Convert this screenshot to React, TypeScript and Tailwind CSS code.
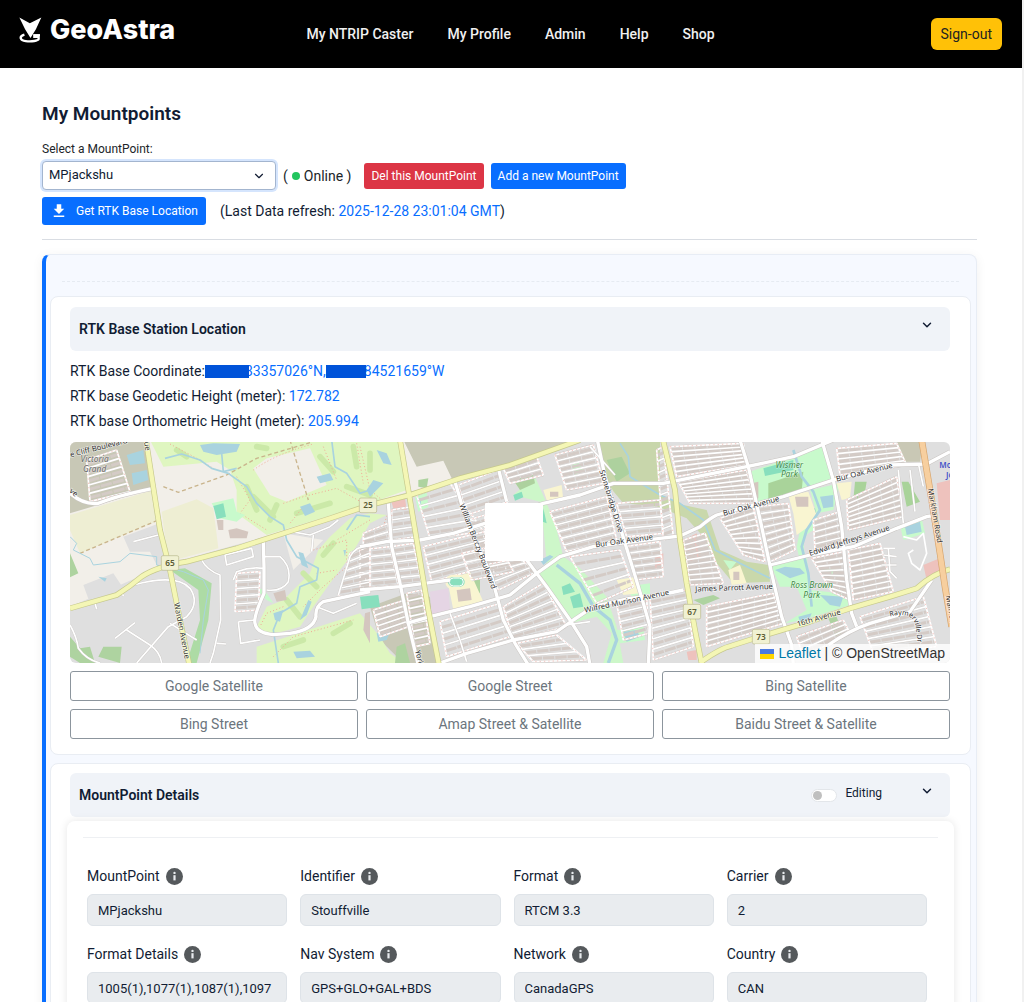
import { useState } from "react";
import { ChevronDown } from "lucide-react";
import { MdDownload } from "react-icons/md";

type Point = [number, number];

interface Block {
  corners: [Point, Point, Point, Point];
  rows: number;
}

interface Field {
  id: string;
  label: string;
  value: string;
}

const navLinks = ["My NTRIP Caster", "My Profile", "Admin", "Help", "Shop"];

const mapLinks = [
  "Google Satellite",
  "Google Street",
  "Bing Satellite",
  "Bing Street",
  "Amap Street & Satellite",
  "Baidu Street & Satellite",
];

const fields: Field[] = [
  { id: "mountpoint", label: "MountPoint", value: "MPjackshu" },
  { id: "identifier", label: "Identifier", value: "Stouffville" },
  { id: "format", label: "Format", value: "RTCM 3.3" },
  { id: "carrier", label: "Carrier", value: "2" },
  { id: "format-details", label: "Format Details", value: "1005(1),1077(1),1087(1),1097" },
  { id: "nav-system", label: "Nav System", value: "GPS+GLO+GAL+BDS" },
  { id: "network", label: "Network", value: "CanadaGPS" },
  { id: "country", label: "Country", value: "CAN" },
];

// Residential blocks: top-left, top-right, bottom-right, bottom-left, number of streets
const blocks: Block[] = [
  { corners: [[1040, 165], [1140, 130], [1240, 275], [1080, 295]], rows: 4 },
  { corners: [[1165, 135], [1285, 90], [1315, 185], [1190, 225]], rows: 3 },
  { corners: [[1195, 240], [1245, 225], [1245, 320], [1220, 330]], rows: 3 },
  { corners: [[1060, 320], [1245, 275], [1270, 375], [1085, 425]], rows: 4 },
  { corners: [[1300, 85], [1400, 50], [1420, 105], [1320, 130]], rows: 3 },
  { corners: [[1455, 45], [1570, 15], [1600, 130], [1490, 150]], rows: 6 },
  { corners: [[1440, 215], [1610, 170], [1640, 300], [1490, 335]], rows: 6 },
  { corners: [[1640, 190], [1770, 180], [1780, 280], [1670, 290]], rows: 4 },
  { corners: [[870, 330], [960, 320], [985, 435], [870, 445]], rows: 5 },
  { corners: [[965, 320], [1030, 310], [1055, 430], [995, 435]], rows: 5 },
  { corners: [[965, 210], [1025, 200], [1040, 290], [965, 300]], rows: 3 },
  { corners: [[880, 280], [955, 250], [958, 300], [880, 315]], rows: 2 },
  { corners: [[910, 510], [1005, 480], [1015, 560], [930, 590]], rows: 5 },
  { corners: [[1010, 460], [1055, 450], [1080, 610], [1035, 620]], rows: 7 },
  { corners: [[1110, 545], [1290, 490], [1320, 590], [1130, 650]], rows: 3 },
  { corners: [[1300, 500], [1420, 430], [1490, 560], [1330, 600]], rows: 5 },
  { corners: [[1240, 375], [1350, 355], [1400, 395], [1285, 450]], rows: 3 },
  { corners: [[1500, 350], [1650, 330], [1690, 440], [1580, 490]], rows: 3 },
  { corners: [[1665, 320], [1770, 305], [1780, 410], [1695, 420]], rows: 5 },
  { corners: [[1640, 490], [1730, 470], [1735, 580], [1660, 600]], rows: 4 },
  { corners: [[1740, 470], [1850, 450], [1870, 620], [1750, 660]], rows: 6 },
  { corners: [[1340, 610], [1460, 585], [1550, 660], [1390, 665]], rows: 3 },
  { corners: [[1800, 20], [2020, 10], [2030, 75], [1820, 110]], rows: 6 },
  { corners: [[1825, 125], [2030, 90], [2055, 190], [1860, 190]], rows: 7 },
  { corners: [[1950, 235], [2050, 200], [2085, 365], [2020, 345]], rows: 9 },
  { corners: [[1840, 300], [1905, 280], [1960, 430], [1860, 435]], rows: 9 },
  { corners: [[2065, 200], [2155, 190], [2175, 330], [2100, 365]], rows: 8 },
  { corners: [[2300, 25], [2480, 10], [2510, 75], [2310, 105]], rows: 5 },
  { corners: [[2330, 180], [2480, 110], [2500, 230], [2335, 270]], rows: 7 },
  { corners: [[2230, 240], [2310, 215], [2325, 310], [2235, 330]], rows: 5 },
  { corners: [[2225, 355], [2320, 335], [2340, 480], [2285, 455]], rows: 8 },
  { corners: [[2335, 330], [2430, 310], [2470, 455], [2350, 480]], rows: 9 },
  { corners: [[1910, 500], [2110, 460], [2140, 550], [1910, 620]], rows: 7 },
  { corners: [[1760, 30], [1780, 20], [1810, 290], [1780, 300]], rows: 8 },
  { corners: [[2180, 590], [2320, 540], [2340, 580], [2200, 650]], rows: 3 },
  { corners: [[2370, 530], [2560, 470], [2600, 620], [2410, 640]], rows: 5 },
  { corners: [[1175, 340], [1290, 315], [1330, 395], [1205, 420]], rows: 3 },
  { corners: [[50, 60], [140, 30], [180, 155], [60, 185]], rows: 5 },
  { corners: [[500, 400], [570, 395], [565, 510], [495, 515]], rows: 5 },
  { corners: [[840, 340], [900, 310], [900, 455], [805, 470]], rows: 5 },
];

const lerp = (a: Point, b: Point, t: number): Point => [
  Math.round(a[0] + (b[0] - a[0]) * t),
  Math.round(a[1] + (b[1] - a[1]) * t),
];

function StreetBlock({ corners, rows }: Block) {
  const [a, b, c, d] = corners;
  let streets = "";
  let houses = "";
  for (let i = 0; i <= rows; i++) {
    const s = lerp(a, d, i / rows);
    const e = lerp(b, c, i / rows);
    streets += `M${s}L${e}`;
    if (i < rows) {
      houses += `M${lerp(a, d, (i + 0.5) / rows)}L${lerp(b, c, (i + 0.5) / rows)}`;
    }
  }
  return (
    <g fill="none">
      <path d={houses} stroke="#d4cbc6" strokeWidth="9" strokeDasharray="34 3" />
      <path d={streets} stroke="#cbc5c1" strokeWidth="7" />
      <path d={`${streets}M${a}L${d}M${b}L${c}`} stroke="#fff" strokeWidth="5" />
      <path d={`M${a}L${b}L${c}L${d}Z`} stroke="#f2aca5" strokeWidth="2" strokeDasharray="4 9" />
    </g>
  );
}

function Shield({ x, y, label }: { x: number; y: number; label: string }) {
  return (
    <g>
      <rect x={x - 26} y={y - 22} width="52" height="44" rx="5" fill="#f0f1d2" stroke="#b9b98e" strokeWidth="2" />
      <text x={x} y={y + 9} textAnchor="middle" fontSize="25" fill="#5b5b34" fontWeight="600">
        {label}
      </text>
    </g>
  );
}

function StreetMap() {
  const major = [
    "M228 0L248 130L270 270L300 390L330 540L358 675",
    "M0 505L140 465Q180 440 215 410Q260 380 350 365L500 325L780 235L900 195L1020 165L1170 115L1320 75L1530 0",
    "M990 0L1015 150L1045 330L1075 510L1107 675",
    "M1779 0L1815 150L1830 300L1850 430L1875 570L1896 675",
    "M1890 668Q1950 625 1985 617L2070 590L2220 545L2340 505L2460 470L2540 445Q2590 400 2640 388",
  ];
  const minor = [
    "M0 160Q40 195 85 190Q130 170 250 145",
    "M1155 125L1180 210L1220 310L1265 410L1300 540L1335 610L1375 675",
    "M870 320L950 305L1050 300L1150 280L1245 250L1420 190L1530 165L1630 130L1780 130L1880 110L2030 80L2170 50L2290 0",
    "M870 450L990 440L1080 428L1140 420",
    "M1010 550L1080 530L1200 500L1320 465L1400 400L1470 350L1570 320L1770 295L1830 288L1890 260Q1920 235 1940 225L2140 170L2290 120L2460 75L2570 72L2640 35",
    "M955 190L965 320L990 430L1015 550L1045 675",
    "M1110 669L1190 640L1330 600L1460 575L1510 540L1570 500L1680 475L1770 465L1840 450",
    "M1582 0L1605 110L1650 260L1690 390L1720 490L1740 560L1735 675",
    "M1285 85L1310 185M1370 360L1430 440L1500 540L1550 620L1560 675",
    "M2010 0L2035 80L2075 260L2105 400L2135 530L2165 615L2170 675",
    "M2255 0L2290 120L2315 260L2330 420L2345 520L2360 560",
    "M2100 375L2220 345L2350 320L2480 265L2570 230L2600 225",
    "M2275 615Q2340 570 2400 550L2520 515L2585 420",
    "M580 305L582 380L582 460Q550 530 555 550Q560 580 610 584L660 580Q730 570 738 530Q735 500 760 485L900 455",
    "M805 465L840 350Q860 315 900 318L960 300",
    "M1140 520L1170 600L1190 665",
    "M190 435Q320 400 360 445Q390 490 350 530L295 560L200 669",
    "M0 555Q20 590 25 625Q50 660 90 669M135 595L195 548M170 570L240 615Q270 635 275 669",
    "M395 360Q410 390 450 405L452 540L430 640L420 669M190 305L265 285M300 550L380 600M440 610L468 612",
    "M580 350L630 350Q665 380 655 425Q635 455 590 450M490 420L500 395Q540 380 580 385M505 545L555 540M505 545L512 610L570 600M465 345L545 325L550 350L470 375Z",
    "M665 275L720 285L780 260L805 240M730 285L725 335M740 500L790 520L860 490",
    "M75 490L80 508M155 455L160 468",
    "M1560 20L1635 105M1490 555L1560 545M2440 325L2475 325M2455 325L2460 395L2480 415M2440 345L2480 350M2435 375L2480 375",
    "M2520 90L2535 215M2545 70L2560 140M2485 90L2500 250",
  ];

  return (
    <svg
      viewBox="0 6 2640 663"
      preserveAspectRatio="xMidYMid slice"
      className="block h-[221px] w-full"
      role="img"
      aria-label="Base station map"
      fontFamily='"Noto Sans", sans-serif'
    >
      <rect width="2640" height="680" fill="#dfdfdf" />

      {/* open land and farmland */}
      <path d="M0 0H880L1120 0L1360 70L1000 160L640 275L300 370L0 500Z" fill="#f2efe9" />
      <path d="M0 225L250 150L285 310L270 240L30 340L0 270Z" fill="#eeeed3" />
      <path d="M275 215L380 178L430 205L445 325L295 365Z" fill="#eeeed3" />
      <path d="M160 290L268 250L285 370L265 385L240 335L180 335Z" fill="#dfdfdf" />
      <path d="M40 435L130 400L160 445L60 490Z" fill="#dfdfdf" />
      <path d="M640 280L760 300L670 390Z" fill="#f2efe9" />
      <path d="M0 0H225L250 145L0 220Z" fill="#c8c8b6" />
      <path d="M1000 0H1530L1150 125L1120 62L1040 80Z" fill="#c8c8b6" />
      <path d="M900 500L1010 460L1080 470L1100 669H1000L930 600Z" fill="#c8c8b6" />
      <path d="M2480 0H2560L2550 65H2500Z" fill="#c9c8b5" />

      {/* golf course and parks */}
      <path d="M240 0H900L990 0L1010 150L900 190L590 285L500 220L500 150L480 90L440 65L280 80Z" fill="#dff6c0" />
      <path d="M550 85L590 55L720 25L770 135L650 185L600 165Z" fill="#f2efe9" />
      <path d="M900 220L840 235L780 290L745 330L720 400L640 480L590 500L560 560L600 585L690 560L730 500L780 430L840 350L900 250L950 225Z" fill="#dff6c0" />
      <path d="M560 620L870 520L930 590L960 640L1000 669H560Z" fill="#dff6c0" />
      <g fill="none" stroke="#cbe9a8" strokeWidth="17" strokeLinecap="round">
        <path d="M560 20L590 25M750 50L790 95M850 20L860 80M530 140L560 210M620 195L600 240M680 220L780 190M830 140L900 165M760 345L790 310M700 400L740 440M650 480L690 530M900 40V90M640 620L700 600M790 580L840 550M320 30L350 50M550 170L610 230" />
      </g>
      <g fill="none" stroke="#f0a994" strokeWidth="3" strokeDasharray="3 7">
        <path d="M300 12L390 60L430 85M500 110L540 180L510 220L590 270M550 90Q620 40 730 12M640 190L700 170L800 145L890 195M700 200L660 250M730 330L830 300L830 380L760 440L700 500M640 500L590 520L570 560M760 20L800 120M740 400L800 390M860 10L880 130M900 240L800 300M610 650L670 590L850 540M870 20L900 150L960 200L940 260" />
      </g>
      <g fill="none" stroke="#c9b48c" strokeWidth="4" strokeDasharray="12 8">
        <path d="M280 140L325 157L470 105L560 55L720 8M660 0L690 100L715 180M30 340L265 240" />
      </g>
      <path d="M300 390L345 385L425 430L415 540L380 669H350L390 540L385 450Z" fill="#addba5" />
      <path d="M0 340L25 400L0 412ZM0 590L30 625L60 620L75 669H30L0 650ZM85 650L100 620L155 620L150 669Z" fill="#aed3a0" />
      <path d="M1580 0H1770V200L1660 190L1610 130Z" fill="#c8d6ab" />
      <path d="M1610 60L1655 50L1680 100L1640 125Z" fill="#add19e" />
      <path d="M1740 150L1840 195L1910 210L1950 330L2030 365L2095 375L2100 425L1990 430L1940 370L1900 290L1850 235L1740 190Z" fill="#c9d8ab" />
      <path d="M1330 165L1395 110L1430 190L1455 250L1480 350L1530 385L1610 470L1640 560L1660 669H1600L1625 580L1580 530L1500 550L1400 400L1430 370L1420 260L1410 185Z" fill="#cdf7c9" />
      <path d="M1330 120L1390 105L1395 130L1350 150Z" fill="#add19e" />
      <path d="M2040 95L2170 50L2260 10L2285 120L2140 165L2055 185Z" fill="#c8facc" />
      <path d="M2095 130L2200 95L2195 155L2095 180ZM2355 125L2390 125L2380 185L2350 180ZM2495 125H2515L2550 185L2510 200Z" fill="#a9d39a" />
      <path d="M2220 150L2310 130L2290 210L2240 220L2230 270L2200 290L2210 450L2180 320L2190 270L2240 220Z" fill="#c8facc" />
      <path d="M2105 380L2210 350L2220 450L2270 455L2330 465L2340 495L2200 540L2145 550L2210 510L2180 440L2130 440Z" fill="#c8facc" />
      <path d="M2490 255L2555 235L2565 280L2500 300ZM1960 360L2000 365L1980 390ZM1670 440L1740 430L1740 480L1690 480ZM2250 390L2300 385L2280 410ZM1640 570L1720 560L1725 600L1650 610Z" fill="#c8facc" />
      <path d="M2275 535L2300 530L2320 590L2300 595ZM1870 480L1930 465L1950 475L1900 495ZM980 620L1005 610L1020 669H975ZM1045 120L1075 115L1070 145L1045 140ZM1200 425L1230 415L1230 460L1205 440Z" fill="#aed3a0" />
      <path d="M1035 170L1070 155L1075 200L1045 215ZM425 190L490 175L500 215L525 225L500 245L450 235ZM1505 75L1525 68L1540 90L1515 105ZM560 450L580 445L610 490L590 480Z" fill="#c8facc" />
      <g fill="#88dfbd">
        <path d="M430 198L460 190L468 230L440 238ZM870 470L925 465L930 500L875 508ZM1330 165L1355 155L1360 172L1335 182ZM1420 205L1430 250L1418 245ZM1475 440L1500 430L1515 455L1480 465ZM1500 470L1530 460L1540 500L1510 505ZM2080 85L2170 60L2170 90L2085 108ZM2205 215L2235 205L2245 245L2215 250ZM2180 255L2205 250L2208 262L2185 265Z" />
      </g>

      {/* schools and buildings */}
      <path d="M1130 410L1200 395L1240 485L1150 510ZM1420 150L1475 135L1480 180L1430 180ZM1640 420L1700 410L1710 460L1660 465ZM2155 165L2215 155L2245 240L2180 285L2170 220ZM2300 130L2345 125L2340 175L2315 180ZM1975 390L2010 375L2030 430L1985 435Z" fill="#f9f5d1" />
      <path d="M1080 455L1135 445L1140 510L1085 525Z" fill="#e5d5e4" />
      <path d="M1160 450L1200 445L1205 480L1165 485ZM475 270L500 265L535 275L530 295L480 295ZM440 240L460 240L460 270L445 270ZM1440 155H1465V170H1440ZM2175 170H2215V200H2180ZM1990 395H2008V420H1990ZM2045 130L2065 125L2065 175L2050 178ZM610 460L645 450L650 480L620 485ZM885 520L900 515V610L880 570Z" fill="#d4c6bf" />
      <path d="M2600 130L2640 120V240H2610ZM1850 295L1880 280L1895 350L1850 370ZM960 170L1005 175L1010 210L970 205ZM2560 375L2620 350V400L2570 420ZM1850 635L1880 630L1880 660H1855ZM1755 350L1780 340V385H1755Z" fill="#eec2bd" />

      {/* water */}
      <g fill="#a9d3df">
        <path d="M390 15L430 10L510 12L500 35L440 45L400 35ZM170 45L220 30L225 70L180 75ZM185 100L230 90L235 120L190 135ZM690 200L720 190L735 215L705 228ZM685 335L700 340L715 385L695 375ZM690 540L715 480L725 485L710 525ZM670 635L720 632L735 650L680 655ZM610 520L640 510L630 545L615 540ZM85 410L110 415L105 425ZM820 330L828 330L825 350ZM740 110L780 100L790 120L750 130ZM920 30L950 40L965 75L940 70ZM890 150L910 120L940 130L900 170Z" />
        <path d="M2250 170L2290 165L2290 200L2260 205ZM2115 390L2145 380L2190 385L2205 400L2160 415ZM2250 465L2320 470L2310 500L2280 495ZM2185 530L2225 520L2215 545L2190 545ZM2505 260L2550 245L2555 275L2510 285ZM1660 575L1700 570L1710 590L1670 605ZM1040 175L1055 175L1050 200ZM920 580L960 575L950 600L925 605ZM1410 360L1440 345L1450 350L1420 375Z" />
      </g>
      <g fill="none" stroke="#a9d3df" strokeWidth="5" strokeLinejoin="round">
        <path d="M285 55L335 42L390 60L425 85L475 100L530 140L560 190L600 230L640 255L650 300L680 350L745 385L740 420L690 440L680 490L630 520L610 570L625 669M455 40L460 95L500 85M785 0L795 80L830 100L870 160L900 150M900 230L860 225L830 270" />
        <path d="M0 290L20 310L10 330L60 355L70 375L150 365L180 340L260 350L260 375L340 395L400 420L415 450L400 540L390 640" strokeWidth="3" />
        <path d="M1650 10L1675 50L1680 110L1770 165L1830 190L1900 240L1935 330L2010 370L2100 415" />
        <path d="M1460 375L1530 430L1570 500L1620 540L1640 600L1615 669" strokeWidth="10" />
        <path d="M2170 30L2195 110L2230 155L2250 210L2210 270L2195 320L2215 400L2225 500" strokeWidth="8" />
      </g>

      {blocks.map((b, i) => (
        <StreetBlock key={i} {...b} />
      ))}

      {/* running track */}
      <rect x="1130" y="408" width="58" height="36" rx="18" fill="#88dfbd" stroke="#f9f5d1" strokeWidth="8" />
      <rect x="1138" y="414" width="42" height="24" rx="12" fill="none" stroke="#fff" strokeWidth="3" />

      {/* roads: casing first, then fill */}
      <g fill="none" strokeLinejoin="round">
        {minor.map((d, i) => (
          <path key={i} d={d} stroke="#c9c5c2" strokeWidth={i < 14 ? 13 : 7} />
        ))}
        {minor.map((d, i) => (
          <path key={i} d={d} stroke="#fff" strokeWidth={i < 14 ? 10 : 5} />
        ))}
        {major.map((d, i) => (
          <path key={i} d={d} stroke="#c6c98d" strokeWidth="17" />
        ))}
        {major.map((d, i) => (
          <path key={i} d={d} stroke="#f4f6b5" strokeWidth="13" />
        ))}
        <path d="M2555 0L2585 180L2610 340L2625 440L2645 560" stroke="#d6a56f" strokeWidth="20" />
        <path d="M2555 0L2585 180L2610 340L2625 440L2645 560" stroke="#f7cf9f" strokeWidth="16" />
        <path d="M2500 290L2540 300L2560 280L2570 340L2550 390L2525 370L2515 340L2530 330" stroke="#fff" strokeWidth="5" />
      </g>

      <Shield x={300} y={369} label="65" />
      <Shield x={894} y={196} label="25" />
      <Shield x={1866} y={515} label="67" />
      <Shield x={2073} y={590} label="73" />

      <g fontSize="23" fill="#333" stroke="#fff" strokeOpacity="0.65" strokeWidth="4" paintOrder="stroke">
        <text x="-12" y="52" transform="rotate(-14 0 52)">he Cliff Boulevard</text>
        <text x="-4" y="158" transform="rotate(40 0 158)">ve</text>
        <text x="222" y="6" transform="rotate(80 222 6)">ue</text>
        <text x="312" y="490" transform="rotate(79 312 490)">Warden Avenue</text>
        <text x="1168" y="195" transform="rotate(69 1168 195)">William Berczy Boulevard</text>
        <text x="1588" y="92" transform="rotate(73 1588 92)">Stonebridge Drive</text>
        <text x="1577" y="322" transform="rotate(-8 1577 322)">Bur Oak Avenue</text>
        <text x="1545" y="518" transform="rotate(-12 1545 518)">Wilfred Murison Avenue</text>
        <text x="1035" y="632" transform="rotate(76 1035 632)">York</text>
        <text x="1961" y="228" transform="rotate(-15 1961 228)">Bur Oak Avenue</text>
        <text x="2300" y="125" transform="rotate(-14 2300 125)">Bur Oak Avenue</text>
        <text x="2220" y="348" transform="rotate(-18 2220 348)">Edward Jeffreys Avenue</text>
        <text x="1876" y="455" transform="rotate(-2 1876 455)">James Parrott Avenue</text>
        <text x="2183" y="560" transform="rotate(-16 2183 560)">16th Avenue</text>
        <text x="2573" y="147" transform="rotate(80 2573 147)">Markham Road</text>
        <text x="2627" y="468" transform="rotate(80 2627 468)">Main St</text>
        <path id="raymerville" d="M2460 530Q2525 512 2537 556L2545 630" fill="none" stroke="none" />
        <text fontSize="21">
          <textPath href="#raymerville">Raymerville Dr</textPath>
        </text>
      </g>
      <g fontSize="25" fontStyle="italic" textAnchor="middle" stroke="#fff" strokeOpacity="0.5" strokeWidth="3" paintOrder="stroke">
        <text x="74" y="66" fill="#666">Victoria</text>
        <text x="74" y="95" fill="#666">Grand</text>
        <text x="2158" y="83" fill="#3f8a46">Wismer</text>
        <text x="2158" y="112" fill="#3f8a46">Park</text>
        <text x="2225" y="445" fill="#3f8a46">Ross Brown</text>
        <text x="2225" y="474" fill="#3f8a46">Park</text>
      </g>
      <g fontSize="24" fontWeight="600" fill="#4453c9">
        <text x="2608" y="84">Mount</text>
        <text x="2628" y="114">Joy</text>
      </g>

      <rect x="1245" y="189" width="174" height="174" rx="3" fill="#fff" />
    </svg>
  );
}

function Logo() {
  return (
    <a href="#" className="flex items-center gap-2 pb-2 text-white">
      <svg viewBox="28 30 68 76" className="h-[26px] w-[23px]" aria-hidden="true">
        <path d="M29 31L60 48L94 31L78 66L62 92L46 66Z" fill="#fff" />
        <path
          d="M44 82C27 87 31 99 48 101C66 103 84 100 86 95V88H70"
          fill="none"
          stroke="#fff"
          strokeWidth="7"
        />
        <path d="M70 80H90V86H70Z" fill="#fff" />
      </svg>
      <span className="font-['Inter'] text-[27px] leading-8 font-extrabold">GeoAstra</span>
    </a>
  );
}

function InfoIcon() {
  return (
    <svg viewBox="0 0 17 17" className="h-[17px] w-[17px]" aria-hidden="true">
      <circle cx="8.5" cy="8.5" r="8.5" fill="#55595c" />
      <circle cx="8.5" cy="4.9" r="1.2" fill="#e9ecef" />
      <path d="M7.4 7.2h2.2v5.2H7.4z" fill="#e9ecef" />
    </svg>
  );
}

export default function App() {
  const [locationOpen, setLocationOpen] = useState(true);
  const [detailsOpen, setDetailsOpen] = useState(true);
  const [editing, setEditing] = useState(false);

  return (
    <div className="min-h-screen border-r-2 border-[#f1f1f1] bg-white font-['Roboto',sans-serif] text-sm text-[#111c33]">
      <header className="grid h-[68px] grid-cols-[1fr_auto_1fr] items-center bg-black pr-5 pl-[19px]">
        <Logo />
        <nav className="flex gap-[34px] font-medium text-[#f0f0f0]">
          {navLinks.map((link) => (
            <a key={link} href="#">
              {link}
            </a>
          ))}
        </nav>
        <button className="h-8 justify-self-end rounded-md bg-[#ffc107] px-2.5 text-[#222]">Sign-out</button>
      </header>

      <main className="pr-[45px] pl-[42px]">
        <h1 className="pt-8 text-[19px] leading-7 font-semibold">My Mountpoints</h1>

        <label htmlFor="mount-select" className="mt-3 block text-xs leading-[18px] text-[#212529]">
          Select a MountPoint:
        </label>
        <div className="mt-[3px] flex items-center">
          <div className="relative">
            <select
              id="mount-select"
              className="block h-[29px] w-[234px] appearance-none rounded-sm border border-[#a3b5cf] bg-white px-1.5 text-[13px] shadow-[0_0_0_2px_#d5e5fd] outline-none"
            >
              <option>MPjackshu</option>
            </select>
            <ChevronDown className="pointer-events-none absolute top-2 right-2.5 h-3.5 w-3.5" />
          </div>
          <span className="ml-[7px] flex items-center gap-1 text-[#212529]">
            <span>(</span>
            <span className="h-2 w-2 rounded-full bg-[#22c55e]" />
            <span>Online )</span>
          </span>
          <button className="ml-[13px] h-[26px] rounded-[3px] bg-[#dc3545] px-[7px] text-xs text-white">
            Del this MountPoint
          </button>
          <button className="ml-[7px] h-[26px] rounded-[3px] bg-[#086eff] px-[7px] text-xs text-white">
            Add a new MountPoint
          </button>
        </div>

        <div className="mt-[7px] flex items-center gap-3.5">
          <button className="flex h-7 items-center gap-2 rounded-[3px] bg-[#086eff] px-2 text-xs text-white">
            <MdDownload className="h-[18px] w-[18px]" />
            Get RTK Base Location
          </button>
          <span>
            (Last Data refresh: <span className="text-[#086eff]">2025-12-28 23:01:04 GMT</span>)
          </span>
        </div>

        <hr className="mt-3.5 border-[#d9dde3]" />

        <div className="mt-3.5 rounded-lg border border-l-4 border-[#e8edf5] border-l-[#086eff] bg-[#f6f9ff] pr-[5px] pl-1 shadow-[0_2px_12px_rgba(0,0,0,0.06)]">
          <hr className="mx-3 mt-[26px] border-dashed border-[#e6ebf2]" />

          <section className="mt-3.5 rounded-lg border border-[#e9edf3] bg-white pt-2.5 pr-5 pb-[15px] pl-[19px]">
            <h2>
              <button
                onClick={() => setLocationOpen(!locationOpen)}
                aria-expanded={locationOpen}
                className="flex h-11 w-full items-center justify-between rounded-md bg-[#f0f3f8] pr-4 pl-[9px] font-semibold"
              >
                RTK Base Station Location
                <ChevronDown className="mb-2 h-3.5 w-3.5" strokeWidth={2.5} />
              </button>
            </h2>
            {locationOpen && (
              <>
                <div className="mt-2 mb-2 leading-[25px]">
                  <p>
                    RTK Base Coordinate:
                    <span className="relative -mr-1 inline-block h-[13px] w-11 bg-[#0053d9] align-[-2px]" />
                    <span className="text-[#086eff]">33357026°N,</span>
                    <span className="relative -mr-0.5 inline-block h-[13px] w-10 bg-[#0053d9] align-[-2px]" />
                    <span className="text-[#086eff]">84521659°W</span>
                  </p>
                  <p>
                    RTK base Geodetic Height (meter): <span className="text-[#086eff]">172.782</span>
                  </p>
                  <p>
                    RTK base Orthometric Height (meter): <span className="text-[#086eff]">205.994</span>
                  </p>
                </div>
                <div className="relative overflow-hidden rounded-md">
                  <StreetMap />
                  <div className="absolute right-0 bottom-0 flex items-center bg-white/80 px-[5px] font-['Liberation_Sans'] leading-[19px] text-[#333]">
                    <svg viewBox="0 0 14 10" className="mr-1 h-2.5 w-3.5" aria-hidden="true">
                      <path fill="#4c7be1" d="M0 0h14v5H0z" />
                      <path fill="#ffd500" d="M0 5h14v5H0z" />
                    </svg>
                    <a href="#" className="text-[#0078a8]">
                      Leaflet
                    </a>
                    <span className="whitespace-pre"> | © OpenStreetMap</span>
                  </div>
                </div>
                <div className="mt-2 grid grid-cols-3 gap-2">
                  {mapLinks.map((link) => (
                    <button
                      key={link}
                      className="h-[30px] rounded-[3px] border border-[#8c959d] bg-white text-[#6c757d]"
                    >
                      {link}
                    </button>
                  ))}
                </div>
              </>
            )}
          </section>

          <section className="mt-2 rounded-lg border border-[#e9edf3] bg-white px-4 pt-[9px] pb-4">
            <div className="mr-1 ml-[3px] flex h-11 items-center rounded-md bg-[#f0f3f8] pr-4 pl-[9px]">
              <h2 className="flex-1 font-semibold">MountPoint Details</h2>
              <input
                id="editing"
                type="checkbox"
                role="switch"
                checked={editing}
                onChange={() => setEditing(!editing)}
                className="flex h-[13px] w-[26px] appearance-none items-center rounded-full border border-[#e3e6ea] bg-white px-px before:h-[9px] before:w-[9px] before:rounded-full before:bg-[#bfbfbf] before:content-[''] checked:justify-end checked:bg-[#086eff]"
              />
              <label htmlFor="editing" className="mb-1 ml-2 text-xs">
                Editing
              </label>
              <button
                aria-label="Toggle details"
                aria-expanded={detailsOpen}
                onClick={() => setDetailsOpen(!detailsOpen)}
                className="mb-2 ml-[38px]"
              >
                <ChevronDown className="h-3.5 w-3.5" strokeWidth={2.5} />
              </button>
            </div>
            {detailsOpen && (
              <div className="mt-1 rounded-lg bg-white px-4 pt-4 pb-6 shadow-[0_0_8px_rgba(0,0,0,0.10)]">
                <hr className="border-[#eef0f3]" />
                <div className="mt-7 grid grid-cols-4 gap-x-[13px] gap-y-[18px] pr-[11px] pl-1">
                  {fields.map((f) => (
                    <div key={f.id}>
                      <label htmlFor={f.id} className="flex h-5 items-center gap-1.5">
                        {f.label}
                        <InfoIcon />
                      </label>
                      <input
                        id={f.id}
                        value={f.value}
                        readOnly
                        className="mt-2 block h-8 w-full rounded-md border border-[#dee3e8] bg-[#e9ecef] px-2.5 text-[13px] outline-none"
                      />
                    </div>
                  ))}
                </div>
              </div>
            )}
          </section>
        </div>
      </main>
    </div>
  );
}
